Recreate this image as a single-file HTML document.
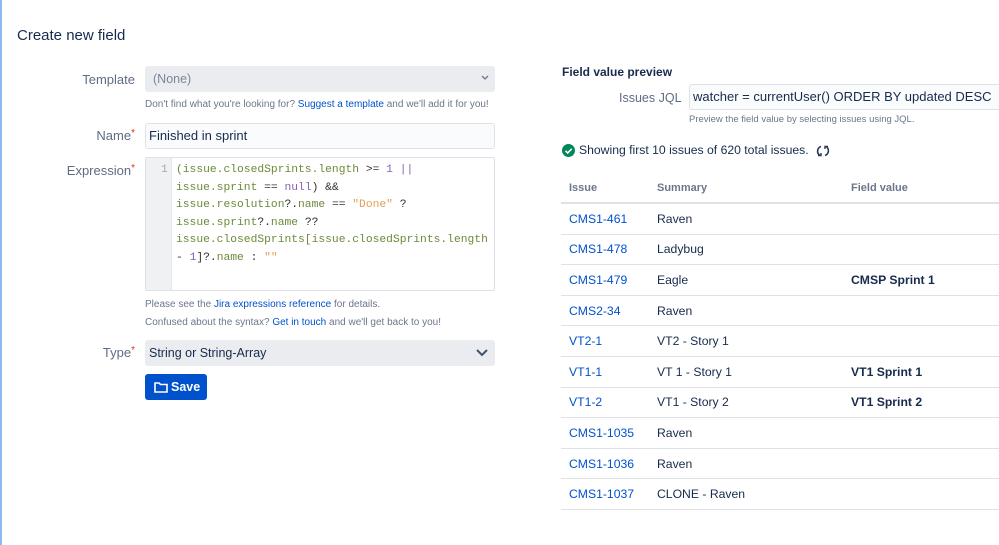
<!DOCTYPE html>
<html><head><style>
body{margin:0;width:999px;height:545px;background:#fff;font-family:"Liberation Sans",sans-serif;position:relative;overflow:hidden;color:#172b4d}
.a{position:absolute}
.lbl{position:absolute;right:864px;font-size:13px;color:#5e6c84;text-align:right}
.req{color:#de350b;font-size:10px;vertical-align:top}
.help{position:absolute;left:145px;font-size:10px;color:#6b778c}
.lnk{color:#0052cc}
.code{font-family:"Liberation Mono",monospace;font-size:11.3px;line-height:17.5px;color:#6b8a3a;white-space:pre}
.p{color:#8a5fb0}.s{color:#e2a05a}.k{color:#333}
table{border-collapse:collapse;font-size:12.2px}
td,th{text-align:left;padding:0 0 0 8px;height:29.6px;border-bottom:1.5px solid #dfe1e6}
th{font-size:11px;color:#6b778c;font-weight:bold;height:29px;border-bottom:2px solid #dfe1e6}
td.i{color:#0052cc}
td.b{font-weight:bold}
</style></head><body>
<div class="a" style="left:0;top:0;width:2px;height:545px;background:#8fb8ec"></div>
<div class="a" style="left:17px;top:27px;font-size:15px;color:#172b4d">Create new field</div>

<div class="lbl" style="top:72px">Template</div>
<div class="a" style="left:145px;top:66px;width:350px;height:26px;background:#ebecf0;border-radius:3px"></div>
<div class="a" style="left:153px;top:72px;font-size:12.5px;color:#7a869a">(None)</div>
<svg class="a" style="left:481px;top:75px" width="8" height="6" viewBox="0 0 8 6"><path d="M1 1l3 3 3-3" stroke="#6b778c" stroke-width="1.3" fill="none"/></svg>
<div class="help" style="top:99px">Don't find what you're looking for? <span class="lnk">Suggest a template</span> and we'll add it for you!</div>

<div class="lbl" style="top:128px">Name<span class="req">*</span></div>
<div class="a" style="left:145px;top:123px;width:348px;height:24px;border:1px solid #dfe1e6;background:#fafbfc;border-radius:3px"></div>
<div class="a" style="left:149px;top:128px;font-size:13px">Finished in sprint</div>

<div class="lbl" style="top:163px">Expression<span class="req">*</span></div>
<div class="a" style="left:145px;top:157px;width:348px;height:132px;border:1px solid #dfe1e6;background:#fff;border-radius:2px"></div>
<div class="a" style="left:146px;top:158px;width:25px;height:132px;background:#f0f1f3;border-right:1px solid #e4e5e8"></div>
<div class="a code" style="left:161px;top:162px;color:#aaa">1</div>
<div class="a code" style="left:176px;top:162px">(issue.closedSprints.length <span class="k">&gt;=</span> <span class="p">1</span> <span class="p">||</span>
issue.sprint <span class="k">==</span> <span class="p">null</span><span class="k">) &amp;&amp;</span>
issue.resolution<span class="k">?.</span>name <span class="k">==</span> <span class="s">"Done"</span> <span class="k">?</span>
issue.sprint<span class="k">?.</span>name <span class="k">??</span>
issue.closedSprints[issue.closedSprints.length
<span class="k">-</span> <span class="p">1</span><span class="k">]?.</span>name <span class="k">:</span> <span class="s">""</span></div>
<div class="help" style="top:299px">Please see the <span class="lnk">Jira expressions reference</span> for details.</div>
<div class="help" style="top:317px">Confused about the syntax? <span class="lnk">Get in touch</span> and we'll get back to you!</div>

<div class="lbl" style="top:345px">Type<span class="req">*</span></div>
<div class="a" style="left:145px;top:340px;width:350px;height:26px;background:#ebecf0;border-radius:3px"></div>
<div class="a" style="left:149px;top:346px;font-size:12.5px">String or String-Array</div>
<svg class="a" style="left:476px;top:348px" width="12" height="9" viewBox="0 0 12 9"><path d="M1 2l5 5 5-5" stroke="#42526e" stroke-width="2" fill="none"/></svg>
<div class="a" style="left:145px;top:374px;width:62px;height:26px;background:#0052cc;border-radius:3px"></div>
<svg class="a" style="left:154px;top:381px" width="14" height="12" viewBox="0 0 14 12"><path d="M1 2h4l1.5 1.5H13V11H1z" stroke="#fff" stroke-width="1.6" fill="none"/></svg>
<div class="a" style="left:171px;top:380px;font-size:12.5px;color:#fff;font-weight:bold">Save</div>

<div class="a" style="left:562px;top:65px;font-size:12px;font-weight:bold;color:#172b4d">Field value preview</div>
<div class="a" style="left:619px;top:91px;font-size:12.5px;color:#5e6c84">Issues JQL</div>
<div class="a" style="left:689px;top:84px;width:320px;height:24px;border:1px solid #dfe1e6;background:#fafbfc;border-radius:3px"></div>
<div class="a" style="left:693px;top:89px;font-size:13px">watcher = currentUser() ORDER BY updated DESC</div>
<div class="a" style="left:689px;top:114px;font-size:9.5px;color:#6b778c">Preview the field value by selecting issues using JQL.</div>
<div class="a" style="left:562px;top:144px;width:13px;height:13px;border-radius:50%;background:#00875a"></div>
<svg class="a" style="left:562px;top:144px" width="13" height="13"><path d="M3.5 6.8l2.2 2.2 4-4.2" stroke="#fff" stroke-width="1.6" fill="none"/></svg>
<div class="a" style="left:579px;top:143px;font-size:12.2px">Showing first 10 issues of 620 total issues.</div>
<svg class="a" style="left:816px;top:144px" width="14" height="14" viewBox="0 0 14 14"><path d="M5 2.5A5 5 0 0 0 4 11.5M9 11.5A5 5 0 0 0 10 2.5" stroke="#253858" stroke-width="1.6" fill="none"/><path d="M2 11.5h3V9M12 2.5H9V5" stroke="#253858" stroke-width="1.4" fill="none"/></svg>

<table class="a" style="left:561px;top:173px;width:438px">
<tr><th style="width:80px">Issue</th><th style="width:186px">Summary</th><th>Field value</th></tr>
<tr><td class="i">CMS1-461</td><td>Raven</td><td></td></tr>
<tr><td class="i">CMS1-478</td><td>Ladybug</td><td></td></tr>
<tr><td class="i">CMS1-479</td><td>Eagle</td><td class="b">CMSP Sprint 1</td></tr>
<tr><td class="i">CMS2-34</td><td>Raven</td><td></td></tr>
<tr><td class="i">VT2-1</td><td>VT2 - Story 1</td><td></td></tr>
<tr><td class="i">VT1-1</td><td>VT 1 - Story 1</td><td class="b">VT1 Sprint 1</td></tr>
<tr><td class="i">VT1-2</td><td>VT1 - Story 2</td><td class="b">VT1 Sprint 2</td></tr>
<tr><td class="i">CMS1-1035</td><td>Raven</td><td></td></tr>
<tr><td class="i">CMS1-1036</td><td>Raven</td><td></td></tr>
<tr><td class="i">CMS1-1037</td><td>CLONE - Raven</td><td></td></tr>
</table>
</body></html>
